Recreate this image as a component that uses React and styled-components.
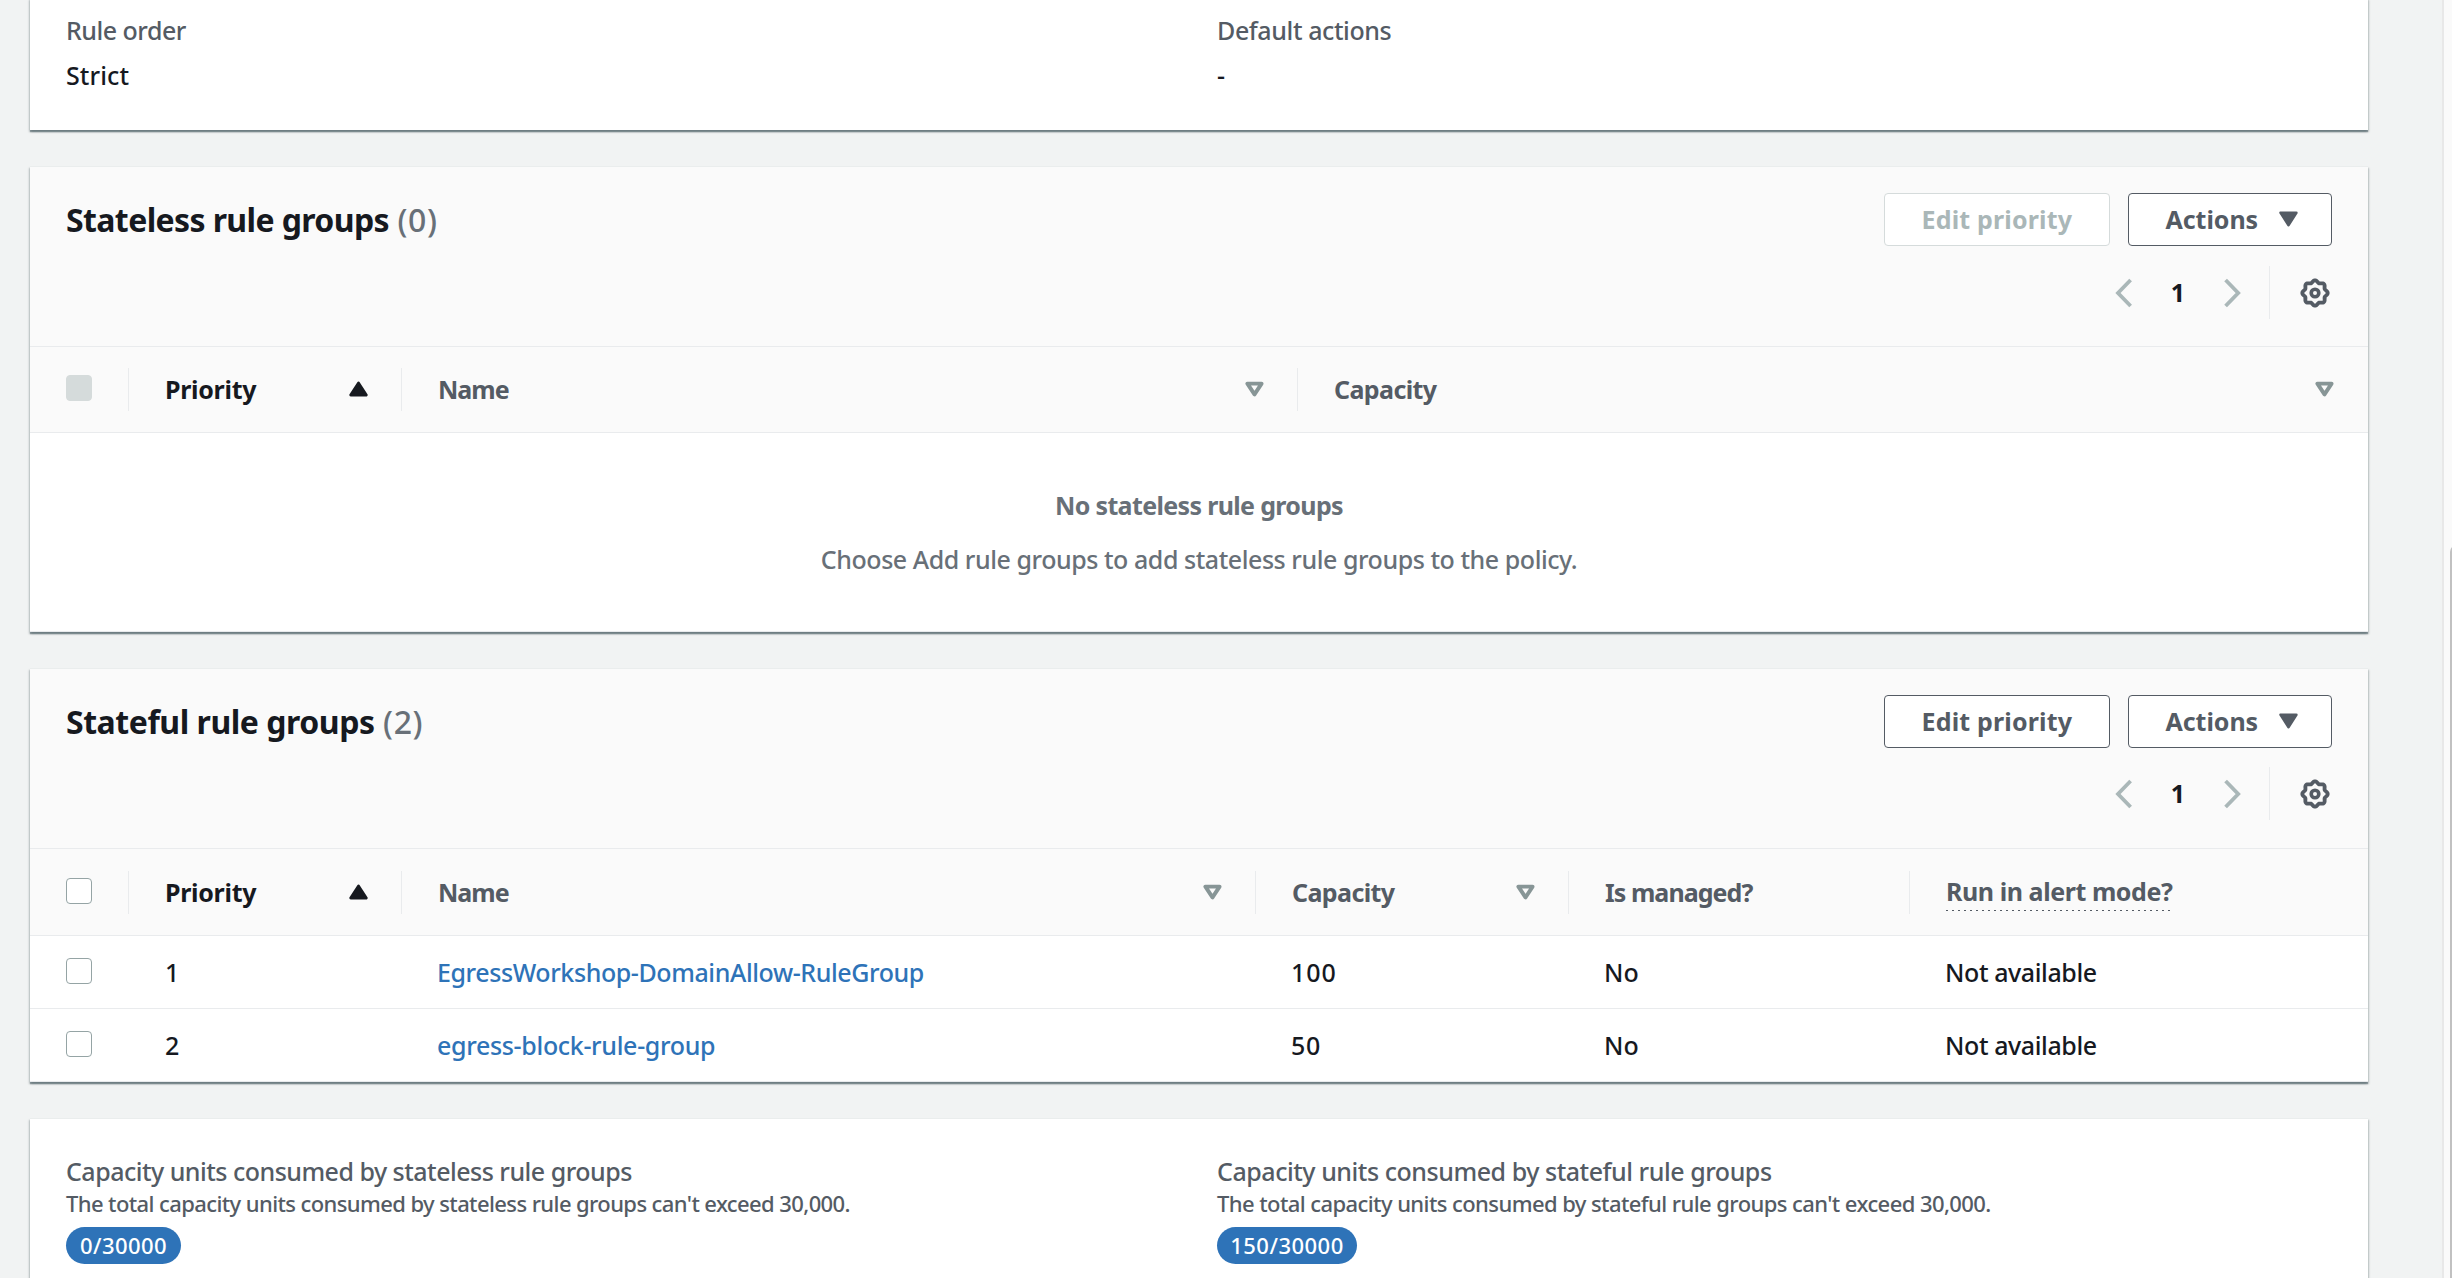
import React from "react";
import styled, { createGlobalStyle, css } from "styled-components";

const color = {
  page: "#f1f3f3",
  header: "#fafafa",
  line: "#e9ebed",
  text: "#16191f",
  label: "#545b64",
  muted: "#687078",
  link: "#2e73b8",
  disabled: "#aab7b8",
};

const GlobalStyle = createGlobalStyle`
  * { box-sizing: border-box; }
  body {
    margin: 0;
    overflow: hidden;
    background: ${color.page};
    font-family: "Noto Sans", "Open Sans", sans-serif;
    font-size: 25px;
    line-height: 40px;
    font-weight: 500;
    color: ${color.text};
  }
`;

const Page = styled.div`
  display: flex;
  height: 1278px;
  overflow: hidden;
`;

const Main = styled.main`
  flex: 1;
  min-width: 0;
  display: flex;
  flex-direction: column;
  gap: 36px;
  margin-top: -2px;
  padding: 0 74px 0 30px;
`;

const ScrollTrack = styled.div`
  flex: 0 0 10px;
  overflow: hidden;
  border-left: 2px solid #e8e8e8;
  background: #fafafa;
  padding: 545px 0 0 6px;
`;

const ScrollThumb = styled.div`
  width: 14px;
  height: 760px;
  border-radius: 7px;
  background: #c1c1c1;
`;

const Card = styled.section`
  flex: 0 0 auto;
  height: ${(p) => p.$height}px;
  background: #fff;
  border-top: 1px solid #eaeded;
  box-shadow: 0 2px 1px rgba(0, 28, 36, 0.3), 1px 2px 2px rgba(0, 28, 36, 0.2),
    -1px 2px 2px rgba(0, 28, 36, 0.2);
`;

const Tracked = styled.span`
  white-space: nowrap;
  letter-spacing: ${(p) => p.$track || 0}px;
`;

const Columns = styled.div`
  display: grid;
  grid-template-columns: 1151px 1fr;
  padding: ${(p) => p.$top}px 36px 0;
`;

const Pair = styled.div`
  display: flex;
  flex-direction: column;
  align-items: flex-start;
`;

const PairLabel = styled(Tracked)`
  color: ${color.label};
  line-height: ${(p) => p.$line || 40}px;
`;

const PairValue = styled(Tracked)`
  margin-top: 5px;
`;

const Hint = styled(Tracked)`
  font-size: 22px;
  line-height: 28px;
  color: ${color.label};
`;

const Badge = styled(Tracked)`
  margin-top: 10px;
  height: 37px;
  width: ${(p) => p.$width}px;
  text-align: center;
  border-radius: 19px;
  background: ${color.link};
  color: #fff;
  font-size: 22px;
  line-height: 37px;
`;

const CardHeader = styled.header`
  height: 180px;
  padding: 26px 36px 0;
  background: ${color.header};
  border-bottom: 1px solid ${color.line};
`;

const TitleRow = styled.div`
  display: flex;
  justify-content: space-between;
  height: 53px;
`;

const Heading = styled.h2`
  display: flex;
  gap: 8.5px;
  margin: 0;
  font-size: 32px;
  line-height: 53px;
  font-weight: 700;
`;

const Count = styled(Tracked)`
  font-weight: 500;
  color: ${color.muted};
`;

const ButtonGroup = styled.div`
  display: flex;
  gap: 18px;
`;

const Button = styled.button`
  display: flex;
  align-items: center;
  width: ${(p) => p.$width}px;
  height: 53px;
  padding: 0 0 1px 36.5px;
  border: 1px solid ${color.label};
  border-radius: 4px;
  background: #fff;
  font: inherit;
  font-weight: 700;
  color: ${color.label};
  ${(p) =>
    p.disabled &&
    css`
      border-color: #d5dbdb;
      color: ${color.disabled};
    `}
`;

const Tools = styled.div`
  display: flex;
  justify-content: flex-end;
  align-items: center;
  height: 53px;
  margin-top: ${(p) => p.$gap}px;
  padding-right: 2px;
`;

const PageNumber = styled.span`
  width: 92px;
  padding-bottom: 1px;
  text-align: center;
  font-weight: 700;
`;

const Preferences = styled.div`
  display: flex;
  align-items: center;
  height: 53px;
  margin-left: 28px;
  padding-left: 30px;
  border-left: 1px solid ${color.line};
`;

const Row = styled.div`
  display: grid;
  grid-template-columns: ${(p) => p.$columns};
  align-items: center;
  height: ${(p) => p.$height}px;
  border-bottom: 1px solid ${color.line};
  background: ${(p) => (p.$head ? color.header : "#fff")};
`;

const HeadCell = styled.div`
  display: flex;
  align-items: center;
  justify-content: space-between;
  height: 43px;
  padding: 0 33px 1px 36px;
  border-right: 1px solid ${(p) => (p.$last ? "transparent" : color.line)};
  font-weight: 700;
  color: ${(p) => (p.$active ? color.text : color.label)};
`;

const Cell = styled.div`
  padding-left: ${(p) => p.$indent || 35}px;
`;

const CheckCell = styled(HeadCell)`
  padding: 0 0 0 36px;
  border-right-color: ${(p) => (p.$head ? color.line : "transparent")};
`;

const Checkbox = styled.span`
  width: 26px;
  height: 26px;
  margin-bottom: 3px;
  border: 1.5px solid ${(p) => (p.$disabled ? "#d5dbdb" : "#95a4a5")};
  border-radius: 4px;
  background: ${(p) => (p.$disabled ? "#d5dbdb" : "#fff")};
`;

const Link = styled.a`
  color: ${color.link};
  white-space: nowrap;
  letter-spacing: ${(p) => p.$track}px;
`;

const Dotted = styled(Tracked)`
  padding-bottom: 1px;
  background: repeating-linear-gradient(90deg, ${color.label} 0 2px, transparent 2px 6px)
    left 39px / 100% 1px no-repeat;
`;

const Empty = styled.div`
  display: flex;
  flex-direction: column;
  align-items: center;
  gap: 14px;
  height: 199px;
  padding-top: 52px;
  color: ${color.muted};
  border-bottom: 1px solid ${color.line};
`;

const EmptyTitle = styled(Tracked)`
  font-weight: 700;
`;

const CaretSvg = styled.svg`
  display: block;
  flex: none;
  width: 19px;
  height: 16px;
  margin-left: ${(p) => p.$offset || 0}px;
  stroke-linejoin: round;
`;

const Caret = ({ direction = "down", hollow, fill, offset }) => (
  <CaretSvg viewBox="0 0 19 16" $offset={offset}>
    <path
      d={
        direction === "up"
          ? "M9.5 2 L17.3 14 H1.7 Z"
          : hollow
          ? "M2.4 2.6 H16.6 L9.5 13.4 Z"
          : "M1.7 1.8 H17.3 L9.5 14 Z"
      }
      fill={hollow ? "none" : fill}
      stroke={fill}
      strokeWidth={hollow ? 3.9 : 2.8}
    />
  </CaretSvg>
);

const Chevron = ({ flip }) => (
  <svg width="17" height="30" viewBox="0 0 17 30">
    <path
      d={flip ? "M1.6 2 L14.2 15 L1.6 28" : "M15.6 2 L3 15 L15.6 28"}
      fill="none"
      stroke={color.disabled}
      strokeWidth="3.8"
    />
  </svg>
);

const gearOutline =
  Array.from({ length: 120 }, (_, i) => {
    const a = (i / 120) * Math.PI * 2;
    const r = 11.6 + 1.1 * Math.cos(8 * a);
    return `${i ? "L" : "M"}${(15 + r * Math.cos(a)).toFixed(2)} ${(15 + r * Math.sin(a)).toFixed(2)}`;
  }).join(" ") + " Z";

const Gear = () => (
  <svg width="30" height="30" viewBox="0 0 30 30" fill="none" stroke={color.label}>
    <path d={gearOutline} strokeWidth="3.8" strokeLinejoin="round" />
    <circle cx="15" cy="15" r="3.8" strokeWidth="3.6" />
  </svg>
);

const TableHeader = ({ title, track, count, editDisabled, gap }) => (
  <CardHeader>
    <TitleRow>
      <Heading>
        <Tracked $track={track}>{title}</Tracked>
        <Count $track={0.6}>({count})</Count>
      </Heading>
      <ButtonGroup>
        <Button $width={226} disabled={editDisabled}>
          <Tracked $track={0.17}>Edit priority</Tracked>
        </Button>
        <Button $width={204}>
          <Tracked $track={-0.05}>Actions</Tracked>
          <Caret fill={color.label} offset={20.5} />
        </Button>
      </ButtonGroup>
    </TitleRow>
    <Tools $gap={gap}>
      <Chevron />
      <PageNumber>1</PageNumber>
      <Chevron flip />
      <Preferences>
        <Gear />
      </Preferences>
    </Tools>
  </CardHeader>
);

const SortableCell = ({ label, track, active, last }) => (
  <HeadCell $active={active} $last={last}>
    <Tracked $track={track}>{label}</Tracked>
    {active ? <Caret direction="up" fill={color.text} /> : <Caret hollow fill="#879596" />}
  </HeadCell>
);

const statelessColumns = "99px 273px 896px 1fr";
const statefulColumns = "99px 273px 854px 313px 341px 1fr";

const statefulRows = [
  { priority: "1", name: "EgressWorkshop-DomainAllow-RuleGroup", track: -0.41, capacity: "100", capTrack: 1 },
  { priority: "2", name: "egress-block-rule-group", track: -0.33, capacity: "50", capTrack: 0.6 },
];

export default function App() {
  return (
    <>
      <GlobalStyle />
      <Page>
        <Main>
          <Card $height={132}>
            <Columns $top={11}>
              <Pair>
                <PairLabel $track={-0.5}>Rule order</PairLabel>
                <PairValue $track={0.11}>Strict</PairValue>
              </Pair>
              <Pair>
                <PairLabel $track={-0.4}>Default actions</PairLabel>
                <PairValue>-</PairValue>
              </Pair>
            </Columns>
          </Card>

          <Card $height={466}>
            <TableHeader title="Stateless rule groups" track={-0.61} count={0} editDisabled gap={20} />
            <Row $head $columns={statelessColumns} $height={86}>
              <CheckCell $head>
                <Checkbox $disabled />
              </CheckCell>
              <SortableCell label="Priority" track={-0.3} active />
              <SortableCell label="Name" track={-1} />
              <SortableCell label="Capacity" track={-0.6} last />
            </Row>
            <Empty>
              <EmptyTitle $track={-0.65}>No stateless rule groups</EmptyTitle>
              <Tracked $track={-0.45}>
                Choose Add rule groups to add stateless rule groups to the policy.
              </Tracked>
            </Empty>
          </Card>

          <Card $height={414}>
            <TableHeader title="Stateful rule groups" track={-0.46} count={2} gap={19} />
            <Row $head $columns={statefulColumns} $height={87}>
              <CheckCell $head>
                <Checkbox />
              </CheckCell>
              <SortableCell label="Priority" track={-0.3} active />
              <SortableCell label="Name" track={-1} />
              <SortableCell label="Capacity" track={-0.6} />
              <HeadCell>
                <Tracked $track={-0.95}>Is managed?</Tracked>
              </HeadCell>
              <HeadCell $last>
                <Dotted $track={-0.43}>Run in alert mode?</Dotted>
              </HeadCell>
            </Row>
            {statefulRows.map((row) => (
              <Row key={row.priority} $columns={statefulColumns} $height={73}>
                <CheckCell>
                  <Checkbox />
                </CheckCell>
                <Cell $indent={36}>{row.priority}</Cell>
                <Cell>
                  <Link $track={row.track}>{row.name}</Link>
                </Cell>
                <Cell>
                  <Tracked $track={row.capTrack}>{row.capacity}</Tracked>
                </Cell>
                <Cell>No</Cell>
                <Cell>
                  <Tracked $track={-0.4}>Not available</Tracked>
                </Cell>
              </Row>
            ))}
          </Card>

          <Card $height={220}>
            <Columns $top={35}>
              <Pair>
                <PairLabel $line={35} $track={-0.51}>
                  Capacity units consumed by stateless rule groups
                </PairLabel>
                <Hint $track={-0.6}>
                  The total capacity units consumed by stateless rule groups can't exceed 30,000.
                </Hint>
                <Badge $width={115} $track={0.43}>
                  0/30000
                </Badge>
              </Pair>
              <Pair>
                <PairLabel $line={35} $track={-0.46}>
                  Capacity units consumed by stateful rule groups
                </PairLabel>
                <Hint $track={-0.58}>
                  The total capacity units consumed by stateful rule groups can't exceed 30,000.
                </Hint>
                <Badge $width={140} $track={0.49}>
                  150/30000
                </Badge>
              </Pair>
            </Columns>
          </Card>
        </Main>
        <ScrollTrack>
          <ScrollThumb />
        </ScrollTrack>
      </Page>
    </>
  );
}
